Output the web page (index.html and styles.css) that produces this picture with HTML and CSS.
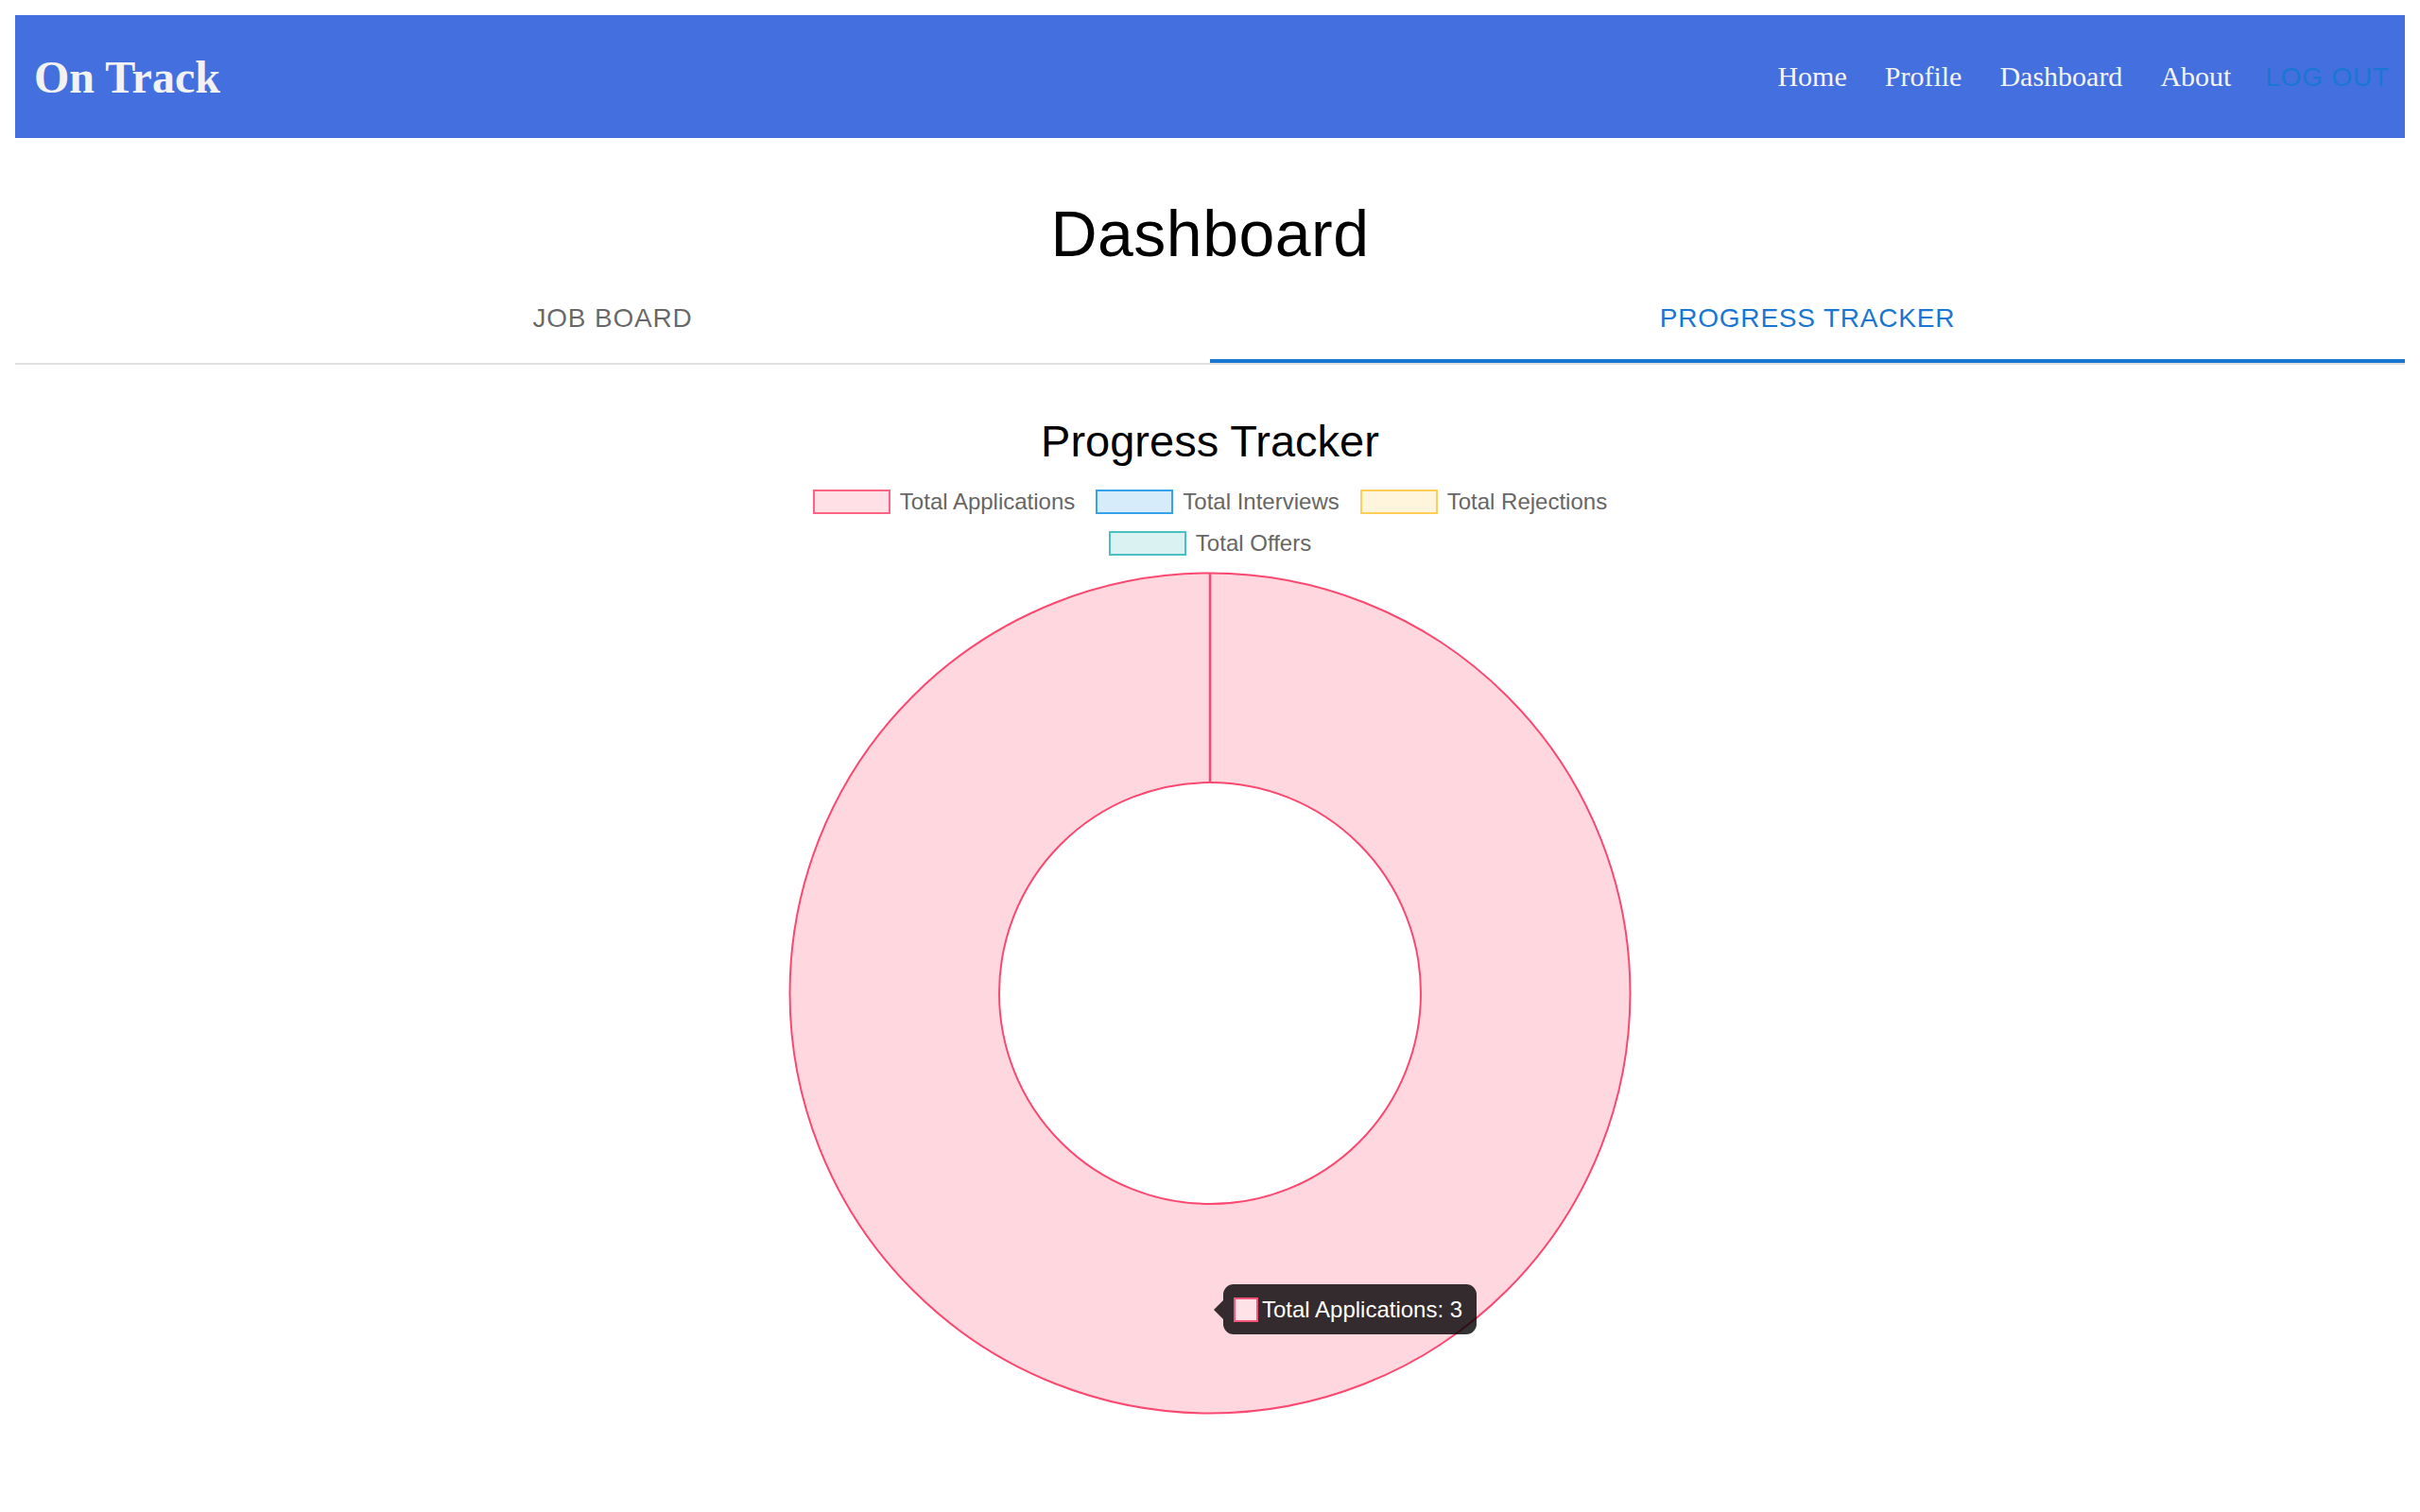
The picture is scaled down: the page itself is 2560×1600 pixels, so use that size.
FILE: index.html
```html
<!DOCTYPE html>
<html lang="en">
<head>
<meta charset="utf-8">
<title>On Track - Dashboard</title>
<link rel="stylesheet" href="styles.css">
</head>
<body>
<header class="topbar">
  <div class="brand">On Track</div>
  <nav class="nav">
    <a class="nav-link" href="#">Home</a>
    <a class="nav-link" href="#">Profile</a>
    <a class="nav-link" href="#">Dashboard</a>
    <a class="nav-link" href="#">About</a>
  </nav>
  <button class="logout">LOG OUT</button>
</header>

<h1 class="page-title">Dashboard</h1>

<div class="tabs">
  <div class="tab">JOB BOARD</div>
  <div class="tab active">PROGRESS TRACKER</div>
</div>

<section class="panel">
  <h2 class="chart-title">Progress Tracker</h2>
  <div class="legend">
    <div class="legend-row">
      <div class="legend-item"><span class="swatch apps"></span>Total Applications</div>
      <div class="legend-item"><span class="swatch interviews"></span>Total Interviews</div>
      <div class="legend-item"><span class="swatch rejections"></span>Total Rejections</div>
    </div>
    <div class="legend-row">
      <div class="legend-item"><span class="swatch offers"></span>Total Offers</div>
    </div>
  </div>
  <div class="chart">
    <svg class="donut" width="900" height="900" viewBox="0 0 900 900">
      <path d="M450 5.5 A444.5 444.5 0 1 1 449.99 5.5 Z M450 227 A223 223 0 1 0 450.01 227 Z" fill="#ffd8df" fill-rule="evenodd"/>
      <circle cx="450" cy="450" r="444.5" fill="none" stroke="#fb4870" stroke-width="2"/>
      <circle cx="450" cy="450" r="223" fill="none" stroke="#fb4870" stroke-width="2"/>
      <line x1="450" y1="5.5" x2="450" y2="227" stroke="#fb4870" stroke-width="2.5"/>
    </svg>
    <div class="tooltip">
      <span class="tip-swatch"></span>
      <span class="tip-text">Total Applications: 3</span>
    </div>
  </div>
</section>
</body>
</html>
```

FILE: styles.css
```css
html, body {
  background: #ffffff;
}

body {
  margin: 16px;
  font-family: "Liberation Sans", Arial, Helvetica, sans-serif;
  color: #000;
}

.topbar {
  height: 130px;
  background: #4470df;
  display: flex;
  align-items: center;
  padding: 0 0 0 20px;
  box-sizing: border-box;
}

.brand {
  font-family: "Liberation Serif", "Times New Roman", serif;
  font-weight: bold;
  font-size: 48px;
  color: #f2f2f2;
  flex: 1;
}

.nav {
  display: flex;
  gap: 40px;
}

.nav-link {
  font-family: "Liberation Serif", "Times New Roman", serif;
  font-size: 30px;
  color: #f4f4f4;
  text-decoration: none;
}

.logout {
  margin-left: 20px;
  background: none;
  border: none;
  padding: 12px 16px;
  font-family: "Liberation Sans", Arial, sans-serif;
  font-size: 28px;
  font-weight: 500;
  letter-spacing: 0.8px;
  line-height: 1.75;
  color: #1976d2;
  cursor: pointer;
}

.page-title {
  margin: 59px 0 0;
  font-size: 68px;
  line-height: 84px;
  font-weight: 400;
  letter-spacing: 0.5px;
  text-align: center;
}

.tabs {
  display: grid;
  grid-template-columns: 1fr 1fr;
  border-bottom: 2px solid #e0e0e0;
}

.tab {
  position: relative;
  height: 94px;
  padding-top: 1px;
  display: flex;
  align-items: center;
  justify-content: center;
  font-size: 28px;
  font-weight: 500;
  letter-spacing: 0.8px;
  color: rgba(0, 0, 0, 0.6);
}

.tab.active {
  color: #1976d2;
}

.tab.active::after {
  content: "";
  position: absolute;
  left: 0;
  right: 0;
  bottom: 0;
  height: 4px;
  background: #1976d2;
}

.panel {
  display: flex;
  flex-direction: column;
  align-items: center;
}

.chart-title {
  margin: 53px 0 0;
  font-size: 47px;
  line-height: 56px;
  font-weight: 400;
  color: #000;
}

.legend {
  margin-top: 14px;
  display: flex;
  flex-direction: column;
  align-items: center;
}

.legend-row {
  display: flex;
  gap: 22px;
  height: 44px;
  align-items: center;
}

.legend-item {
  display: flex;
  align-items: center;
  font-size: 24px;
  color: #666;
}

.swatch {
  width: 82px;
  height: 26px;
  box-sizing: border-box;
  border: 2px solid;
  margin-right: 10px;
}

.swatch.apps {
  border-color: rgb(255, 99, 132);
  background: rgba(255, 99, 132, 0.2);
}

.swatch.interviews {
  border-color: rgb(54, 162, 235);
  background: rgba(54, 162, 235, 0.2);
}

.swatch.rejections {
  border-color: rgb(255, 206, 86);
  background: rgba(255, 206, 86, 0.2);
}

.swatch.offers {
  border-color: rgb(75, 192, 192);
  background: rgba(75, 192, 192, 0.2);
}

.chart {
  position: relative;
  margin-top: 4px;
  width: 900px;
  height: 900px;
}

.donut {
  display: block;
}

.tooltip {
  position: absolute;
  left: 464px;
  top: 758px;
  width: 268px;
  height: 53px;
  box-sizing: border-box;
  padding: 0 12px 0 11px;
  background: rgba(0, 0, 0, 0.8);
  border-radius: 11px;
  display: flex;
  align-items: center;
}

.tooltip::before {
  content: "";
  position: absolute;
  left: -10px;
  top: 50%;
  margin-top: -10px;
  border-top: 10px solid transparent;
  border-bottom: 10px solid transparent;
  border-right: 10px solid rgba(0, 0, 0, 0.8);
}

.tip-swatch {
  width: 26px;
  height: 26px;
  box-sizing: border-box;
  border: 2px solid #f7557a;
  background: #fde3e8;
  margin-right: 4px;
  flex: none;
}

.tip-text {
  font-size: 24px;
  color: #ffffff;
  white-space: nowrap;
}
```
